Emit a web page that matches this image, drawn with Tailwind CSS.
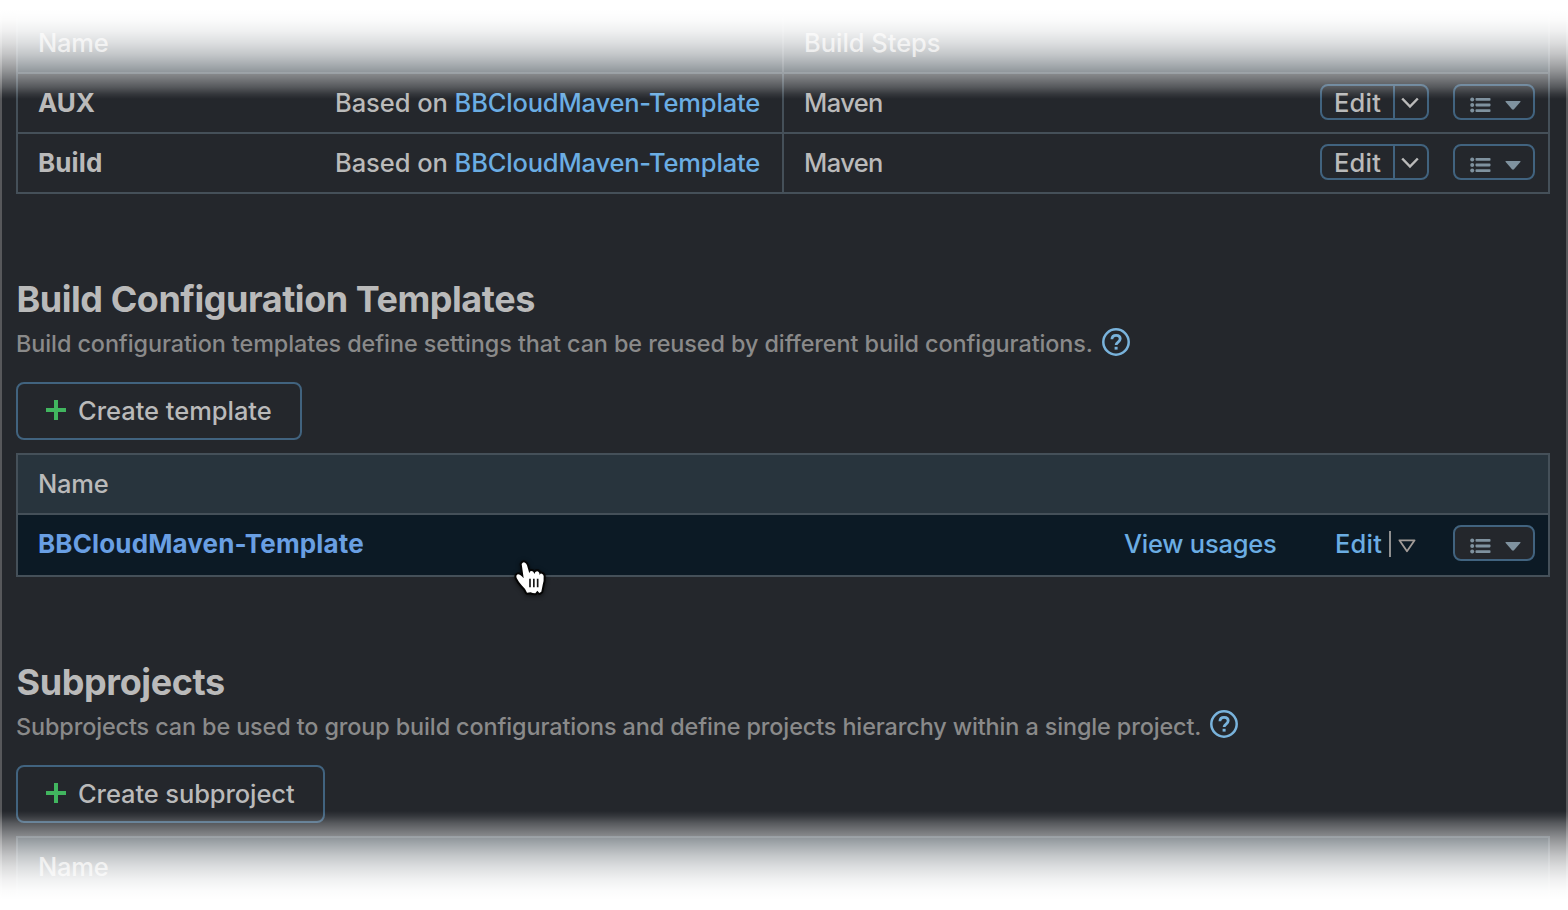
<!DOCTYPE html>
<html lang="en">
<head>
<meta charset="utf-8">
<title>Build Configuration Templates</title>
<script src="https://cdn.jsdelivr.net/npm/@tailwindcss/browser@4"></script>
</head>
<body class="h-[910px] w-[1568px] overflow-hidden bg-white font-['Inter',sans-serif]">
<svg class="hidden">
  <symbol id="list" viewBox="0 0 21 16"><g fill="currentColor"><circle cx="2.2" cy="2.400" r="2"/><circle cx="2.200" cy="8" r="2"/><circle cx="2.200" cy="13.600" r="2"/><rect x="5.500" y="1" width="15" height="2.800" rx=".8"/><rect x="5.500" y="6.600" width="15" height="2.800" rx=".8"/><rect x="5.500" y="12.200" width="15" height="2.800" rx=".8"/></g></symbol>
  <symbol id="caret" viewBox="0 0 16 9"><path d="M1 0h14q1 .2.3 1L9 8.200q-1 .9-2 0L.7 1Q0 .2 1 0z" fill="currentColor"/></symbol>
  <symbol id="chevron" viewBox="0 0 18 12"><path d="M1.200 1.500 9 9.500l7.800-8" fill="none" stroke="currentColor" stroke-width="2.500"/></symbol>
  <symbol id="plus" viewBox="0 0 20 20"><path d="M10 0v20M0 10h20" stroke="currentColor" stroke-width="4"/></symbol>
  <symbol id="help" viewBox="0 0 28 28"><circle cx="14" cy="14" r="12.700" fill="none" stroke="currentColor" stroke-width="2.500"/><path d="M9.900 11.200C10 8.700 11.700 7.300 14.100 7.300c2.400 0 4.100 1.400 4.100 3.500 0 3.300-4.100 3.100-4.100 6.200" fill="none" stroke="currentColor" stroke-width="2.800"/><rect x="12.600" y="18.800" width="3" height="2.800" fill="currentColor"/></symbol>
</svg>
<main class="relative flex h-[910px] flex-col overflow-hidden border-x-2 border-[#57585b] bg-[#24272c] px-3.5 pt-3 text-[25.5px] font-[450] leading-8 tracking-[-0.1px] text-[#bababa]">

  <section class="grid w-[1534px] shrink-0 grid-cols-[764px_764px] gap-0.5 border-2 border-[#455059] bg-[#455059]">
    <div class="flex h-[58px] items-center bg-[#28343d] px-5 tracking-[-0.2px]">Name</div>
    <div class="flex h-[58px] items-center bg-[#28343d] px-5 tracking-[-0.03px]">Build Steps</div>

    <div class="flex h-[58px] items-center justify-between bg-[#24272c] pl-5 pr-[22px]"><b class="text-[26px] font-bold">AUX</b><span class="tracking-[-0.05px]">Based on <a class="tracking-[-0.18px] text-[#6badE3]">BBCloudMaven-Template</a></span></div>
    <div class="flex h-[58px] items-center justify-between bg-[#24272c] pl-5 pr-[13px]"><span class="tracking-[-0.6px]">Maven</span>
      <div class="flex gap-6 pb-0.5">
        <div class="flex h-9 w-[109px] rounded-lg border-2 border-[#41637f]"><span class="flex w-[73px] items-center border-r-2 border-[#41637f] pl-3 pt-0.5 tracking-[0.2px]">Edit</span><svg class="ml-1.5 mt-[11px] h-3 w-[18px]"><use href="#chevron"/></svg></div>
        <div class="flex h-9 w-[82px] rounded-lg border-2 border-[#41637f] bg-[#24272c] pl-[15px] text-[#7f929f]"><svg class="mt-[10.5px] h-4 w-[21px]"><use href="#list"/></svg><svg class="ml-[14px] mt-[15px] h-[9px] w-4"><use href="#caret"/></svg></div>
      </div>
    </div>

    <div class="flex h-[58px] items-center justify-between bg-[#24272c] pl-5 pr-[22px]"><b class="text-[26px] font-bold tracking-[0.1px]">Build</b><span class="tracking-[-0.05px]">Based on <a class="tracking-[-0.18px] text-[#6badE3]">BBCloudMaven-Template</a></span></div>
    <div class="flex h-[58px] items-center justify-between bg-[#24272c] pl-5 pr-[13px]"><span class="tracking-[-0.6px]">Maven</span>
      <div class="flex gap-6 pb-0.5">
        <div class="flex h-9 w-[109px] rounded-lg border-2 border-[#41637f]"><span class="flex w-[73px] items-center border-r-2 border-[#41637f] pl-3 pt-0.5 tracking-[0.2px]">Edit</span><svg class="ml-1.5 mt-[11px] h-3 w-[18px]"><use href="#chevron"/></svg></div>
        <div class="flex h-9 w-[82px] rounded-lg border-2 border-[#41637f] bg-[#24272c] pl-[15px] text-[#7f929f]"><svg class="mt-[10.5px] h-4 w-[21px]"><use href="#list"/></svg><svg class="ml-[14px] mt-[15px] h-[9px] w-4"><use href="#caret"/></svg></div>
      </div>
    </div>
  </section>

  <h2 class="mt-[83px] h-11 shrink-0 whitespace-nowrap pl-[0.5px] text-[36px] font-bold leading-[44px] tracking-[-0.47px]">Build Configuration Templates</h2>
  <div class="flex h-[46px] shrink-0 items-center whitespace-nowrap text-[23.4px] text-[#8a8a8a]"><span class="w-[1086px] tracking-[-0.083px]">Build configuration templates define settings that can be reused by different build configurations.</span><svg class="mb-1 h-7 w-7 text-[#79b3dc]"><use href="#help"/></svg></div>
  <button class="mt-[15px] flex h-[58px] w-[286px] shrink-0 items-center rounded-lg border-2 border-[#41637f] pl-7 tracking-[-0.03px]"><svg class="mr-3 mb-0.5 h-5 w-5 text-[#41b55f]"><use href="#plus"/></svg>Create template</button>

  <section class="mt-[13px] grid w-[1534px] shrink-0 gap-0.5 border-2 border-[#455059] bg-[#455059]">
    <div class="flex h-[58px] items-center bg-[#28343d] px-5 tracking-[-0.2px]">Name</div>
    <div class="flex h-[60px] items-center bg-[#0c1a25] pb-1 pl-5 pr-[13px] text-[#6badE3]">
      <b class="flex-1 pt-0.5 text-[26px] font-bold tracking-[0.14px] text-[#699fe3]">BBCloudMaven-Template</b>
      <a class="w-[211px] pt-0.5 tracking-[-0.24px]">View usages</a>
      <a class="w-[54px] pt-0.5 tracking-[0.2px]">Edit</a>
      <span class="mr-[7px] mt-0.5 h-[26px] w-0.5 bg-[#8f8f8f]"></span>
      <svg class="mr-[37px] mt-[5px] h-[14px] w-[18px] text-[#a29b97]" viewBox="0 0 18 14"><path d="M1.400 1.300h15.200L9 12.300z" fill="none" stroke="currentColor" stroke-width="1.800" stroke-linejoin="round"/></svg>
      <div class="flex h-9 w-[82px] rounded-lg border-2 border-[#41637f] bg-[#24272c] pl-[15px] text-[#7f929f]"><svg class="mt-[10.5px] h-4 w-[21px]"><use href="#list"/></svg><svg class="ml-[14px] mt-[15px] h-[9px] w-4"><use href="#caret"/></svg></div>
    </div>
  </section>

  <h2 class="mt-[83px] h-11 shrink-0 whitespace-nowrap pl-[0.5px] text-[36px] font-bold leading-[44px] tracking-[-0.4px]">Subprojects</h2>
  <div class="flex h-[46px] shrink-0 items-center whitespace-nowrap text-[23.4px] text-[#8a8a8a]"><span class="w-[1194px] tracking-[-0.113px]">Subprojects can be used to group build configurations and define projects hierarchy within a single project.</span><svg class="mb-1.5 h-7 w-7 text-[#79b3dc]"><use href="#help"/></svg></div>
  <button class="mt-[15px] flex h-[58px] w-[309px] shrink-0 items-center rounded-lg border-2 border-[#41637f] pl-7"><svg class="mr-3 mb-0.5 h-5 w-5 text-[#41b55f]"><use href="#plus"/></svg>Create subproject</button>

  <section class="mt-[13px] w-[1534px] shrink-0 border-2 border-[#455059] bg-[#28343d]">
    <div class="flex h-[70px] items-center px-5 pb-3 tracking-[-0.2px]">Name</div>
  </section>
</main>

<svg class="absolute left-[500px] top-[550px] h-[60px] w-[60px] drop-shadow-[0_1px_2px_rgba(0,0,0,0.6)]" viewBox="0 0 180 180">
  <path d="M65 42q4-7 10-4 4 2 6 8l7 24q1-7 6-7 7 0 9 9 2-8 8-8 7 0 8 11 2-5 6-4 5 1 6 7 1 17-3 27l-4 20-6 4-6-7-6 8q-9 0-14-3l-11 1q-6-13-16-22-9-10-15-22-3-9 4-11 7 0 17 12z" fill="#fff" stroke="#050505" stroke-width="12" stroke-linejoin="round" paint-order="stroke"/>
  <path d="M90 86v26M101.500 86v26M113 86v26" stroke="#161616" stroke-width="5"/>
</svg>
<div class="pointer-events-none absolute inset-x-0 top-0 h-[100px] bg-[linear-gradient(to_bottom,#fff_10px,rgba(255,255,255,0.98)_20px,rgba(255,255,255,0.93)_31px,rgba(255,255,255,0.84)_43px,rgba(255,255,255,0.73)_54px,rgba(255,255,255,0.6)_64px,rgba(255,255,255,0.5)_71px,rgba(255,255,255,0.39)_78px,rgba(255,255,255,0.23)_87px,rgba(255,255,255,0.08)_94px,transparent_99px)]"></div>
<div class="pointer-events-none absolute inset-x-0 bottom-0 h-[100px] bg-[linear-gradient(to_top,#fff_10px,rgba(255,255,255,0.98)_20px,rgba(255,255,255,0.93)_31px,rgba(255,255,255,0.84)_43px,rgba(255,255,255,0.73)_54px,rgba(255,255,255,0.6)_64px,rgba(255,255,255,0.5)_71px,rgba(255,255,255,0.39)_78px,rgba(255,255,255,0.23)_87px,rgba(255,255,255,0.08)_94px,transparent_99px)]"></div>
</body>
</html>
